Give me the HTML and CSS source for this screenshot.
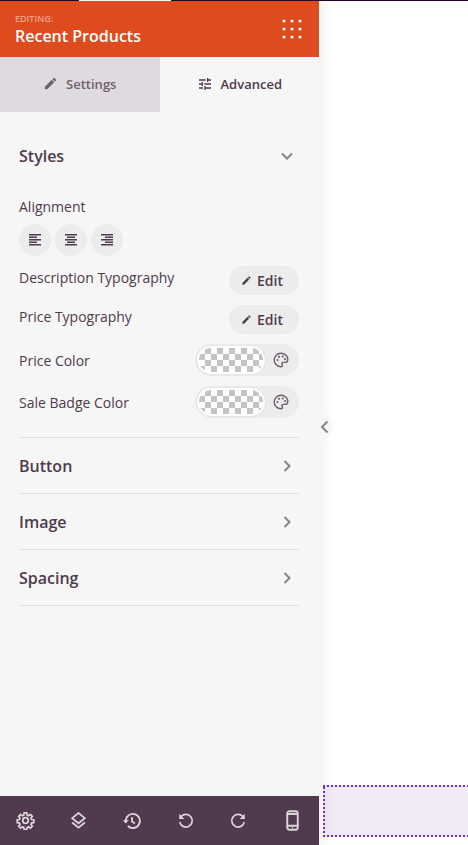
FILE: index.html
```html
<!DOCTYPE html>
<html lang="en">
<head>
    <meta charset="UTF-8">
    <title>Recent Products</title>
    <link rel="stylesheet" href="styles.css">
</head>
<body>
    <div class="topline"><span class="topline-light"></span></div>

    <div class="app">
        <aside class="panel">
            <header class="panel-head">
                <div>
                    <div class="editing">EDITING:</div>
                    <div class="module-name">Recent Products</div>
                </div>
                <svg class="dots" width="20" height="20" viewBox="0 0 20 20" fill="#fff">
                    <circle cx="2" cy="2" r="1.6"/><circle cx="10" cy="2" r="1.6"/><circle cx="18" cy="2" r="1.6"/>
                    <circle cx="2" cy="10" r="1.6"/><circle cx="10" cy="10" r="1.6"/><circle cx="18" cy="10" r="1.6"/>
                    <circle cx="2" cy="18" r="1.6"/><circle cx="10" cy="18" r="1.6"/><circle cx="18" cy="18" r="1.6"/>
                </svg>
            </header>

            <div class="tabs">
                <div class="tab tab-off">
                    <svg width="15" height="15" viewBox="0 0 24 24" fill="#6f5f6d"><path d="M3 17.25V21h3.75L17.81 9.94l-3.75-3.75L3 17.25zM20.71 7.04a1 1 0 0 0 0-1.41l-2.34-2.34a1 1 0 0 0-1.41 0l-1.83 1.83 3.75 3.75 1.83-1.83z"/></svg>
                    <span>Settings</span>
                </div>
                <div class="tab">
                    <svg width="16" height="16" viewBox="0 0 24 24" fill="#4f3a4d"><path d="M3 17v2h6v-2H3zM3 5v2h10V5H3zm10 16v-2h8v-2h-8v-2h-2v6h2zM7 9v2H3v2h4v2h2V9H7zm14 4v-2H11v2h10zm-6-4h2V7h4V5h-4V3h-2v6z"/></svg>
                    <span>Advanced</span>
                </div>
            </div>

            <div class="panel-body">
                <section class="group group-open">
                    <div class="group-title">
                        <span>Styles</span>
                        <svg class="chev" width="14" height="14" viewBox="0 0 14 14"><path d="M2 4.500l5 5 5-5"/></svg>
                    </div>

                    <div class="field-label">Alignment</div>
                    <div class="aligns">
                        <div class="align-btn">
                            <svg width="12" height="12" viewBox="0 0 12 12"><path d="M0 .75h12M0 3.250h8M0 5.750h12M0 8.250h8M0 10.750h12"/></svg>
                        </div>
                        <div class="align-btn">
                            <svg width="12" height="12" viewBox="0 0 12 12"><path d="M0 .75h12M2 3.250h8M0 5.750h12M2 8.250h8M0 10.750h12"/></svg>
                        </div>
                        <div class="align-btn">
                            <svg width="12" height="12" viewBox="0 0 12 12"><path d="M0 .75h12M4 3.250h8M0 5.750h12M4 8.250h8M0 10.750h12"/></svg>
                        </div>
                    </div>

                    <div class="row row-edit">
                        <span>Description Typography</span>
                        <div class="edit-btn">
                            <svg width="11" height="11" viewBox="0 0 24 24" fill="#4f3a4d"><path d="M3 17.25V21h3.75L17.81 9.94l-3.75-3.75L3 17.25zM20.71 7.04a1 1 0 0 0 0-1.41l-2.34-2.34a1 1 0 0 0-1.41 0l-1.83 1.83 3.75 3.75 1.83-1.83z"/></svg>
                            Edit
                        </div>
                    </div>
                    <div class="row row-edit">
                        <span>Price Typography</span>
                        <div class="edit-btn">
                            <svg width="11" height="11" viewBox="0 0 24 24" fill="#4f3a4d"><path d="M3 17.25V21h3.75L17.81 9.94l-3.75-3.75L3 17.25zM20.71 7.04a1 1 0 0 0 0-1.41l-2.34-2.34a1 1 0 0 0-1.41 0l-1.83 1.83 3.75 3.75 1.83-1.83z"/></svg>
                            Edit
                        </div>
                    </div>
                    <div class="row row-color">
                        <span>Price Color</span>
                        <div class="color-pill">
                            <div class="swatch"></div>
                            <svg class="palette" width="16" height="16" viewBox="0 0 16 16"><path class="palette-line" d="M8 1.200C4.200 1.200 1.200 4.200 1.200 8s3 6.800 6.800 6.800c1 0 1.500-.6 1.500-1.300 0-.9-.7-1.100-.7-1.900 0-.7.6-1.200 1.300-1.200h1.600c1.800 0 3.100-1.200 3.100-3C14.800 3.700 11.800 1.200 8 1.200z"/><circle cx="4.500" cy="8" r="1.100"/><circle cx="6" cy="4.800" r="1.100"/><circle cx="9.800" cy="4.500" r="1.100"/><circle cx="12" cy="7" r="1.100"/></svg>
                        </div>
                    </div>
                    <div class="row row-color">
                        <span>Sale Badge Color</span>
                        <div class="color-pill">
                            <div class="swatch"></div>
                            <svg class="palette" width="16" height="16" viewBox="0 0 16 16"><path class="palette-line" d="M8 1.200C4.200 1.200 1.200 4.200 1.200 8s3 6.800 6.800 6.800c1 0 1.500-.6 1.500-1.300 0-.9-.7-1.100-.7-1.900 0-.7.6-1.200 1.300-1.200h1.600c1.800 0 3.100-1.200 3.100-3C14.800 3.700 11.800 1.200 8 1.200z"/><circle cx="4.500" cy="8" r="1.100"/><circle cx="6" cy="4.800" r="1.100"/><circle cx="9.800" cy="4.500" r="1.100"/><circle cx="12" cy="7" r="1.100"/></svg>
                        </div>
                    </div>
                </section>

                <section class="group">
                    <div class="group-title">
                        <span>Button</span>
                        <svg class="chev" width="14" height="14" viewBox="0 0 14 14"><path d="M4.500 2l5 5-5 5"/></svg>
                    </div>
                </section>
                <section class="group">
                    <div class="group-title">
                        <span>Image</span>
                        <svg class="chev" width="14" height="14" viewBox="0 0 14 14"><path d="M4.500 2l5 5-5 5"/></svg>
                    </div>
                </section>
                <section class="group">
                    <div class="group-title">
                        <span>Spacing</span>
                        <svg class="chev" width="14" height="14" viewBox="0 0 14 14"><path d="M4.500 2l5 5-5 5"/></svg>
                    </div>
                </section>
            </div>

            <footer class="panel-foot">
                <svg width="19" height="19" viewBox="0 0 24 24" class="foot-icon"><circle cx="12" cy="12" r="3.500"/><path d="M10.300 2.500h3.400l.5 2.800 1.700.7 2.300-1.600 2.400 2.400-1.600 2.300.7 1.700 2.800.5v3.400l-2.800.5-.7 1.700 1.600 2.300-2.400 2.400-2.300-1.600-1.700.7-.5 2.800h-3.400l-.5-2.800-1.700-.7-2.300 1.600-2.400-2.400 1.600-2.300-.7-1.700-2.800-.5v-3.400l2.800-.5.7-1.700-1.600-2.300 2.400-2.400 2.300 1.600 1.700-.7z"/></svg>
                <svg width="19" height="19" viewBox="0 0 24 24" class="foot-icon"><path d="M12 2.500l8 6.500-8 6.500-8-6.500z"/><path d="M4 14.500l8 6.500 8-6.500"/></svg>
                <svg width="20" height="20" viewBox="0 0 24 24" class="foot-icon"><path d="M4.500 12a8.500 8.500 0 1 1 2.500 6"/><path d="M12 7.500V12.500l3.500 2.500"/><path class="foot-fill" d="M1 11h7l-3.500 4z"/></svg>
                <svg width="19" height="19" viewBox="0 0 24 24" class="foot-icon"><path d="M6.500 7a8 8 0 1 1-1.800 7"/><path class="foot-fill" d="M4 3.500v6.500h6.500z"/></svg>
                <svg width="19" height="19" viewBox="0 0 24 24" class="foot-icon"><path d="M17.500 7a8 8 0 1 0 1.800 7"/><path class="foot-fill" d="M20 3.500v6.500h-6.500z"/></svg>
                <svg width="21" height="21" viewBox="0 0 24 24" class="foot-icon"><rect x="6" y="1.500" width="12" height="21" rx="2.500"/><path d="M6.500 18h11M6.500 4.500h11"/><circle class="foot-fill" cx="12" cy="20.200" r=".9"/></svg>
            </footer>

            <svg class="collapse-tab" width="13" height="52" viewBox="0 0 13 52">
                <path class="collapse-bump" d="M0 0C0 13 13 14 13 26C13 38 0 39 0 52z"/>
                <path class="collapse-chev" d="M8.500 20.500l-5.500 5.500 5.500 5.500"/>
            </svg>
        </aside>

        <main class="canvas">
            <div class="drop-zone"></div>
        </main>
    </div>
</body>
</html>
```

FILE: styles.css
```css
* {
    box-sizing: border-box;
}

html, body {
    height: 100%;
}

body {
    margin: 0;
    background: #fff;
    font-family: "Open Sans", sans-serif;
    color: #4f3a4d;
    overflow: hidden;
    display: flex;
    flex-direction: column;
}

.topline {
    height: 1px;
    background: #23082a;
    padding-left: 79px;
    flex: none;
}

.topline-light {
    display: block;
    width: 92px;
    height: 1px;
    background: #fff;
}

.app {
    flex: 1;
    display: flex;
    min-height: 0;
}

/* Left settings panel */
.panel {
    position: relative;
    width: 319px;
    flex: none;
    display: flex;
    flex-direction: column;
    background: #f6f6f6;
    box-shadow: 4px 0 12px rgba(0,0,0,0.07);
}

.panel-head {
    height: 56px;
    background: #de4b1e;
    display: flex;
    justify-content: space-between;
    align-items: center;
    padding: 0 17px 0 15px;
}

.editing {
    font-size: 9px;
    line-height: 12px;
    font-weight: 600;
    color: #f2a48c;
    margin-top: 1px;
}

.module-name {
    font-size: 16px;
    line-height: 22px;
    font-weight: 600;
    color: #fff;
}

.tabs {
    height: 55px;
    display: flex;
}

.tab {
    width: 50%;
    display: flex;
    justify-content: center;
    align-items: center;
    gap: 8px;
    font-size: 13px;
    font-weight: 600;
    padding-bottom: 2px;
}

.tab-off {
    background: #dfdadf;
    color: #6f5f6d;
}

.panel-body {
    flex: 1;
    padding: 17px 20px 0 19px;
}

.group {
    border-bottom: 1px solid #dfdfdf;
}

.group-title {
    height: 55px;
    display: flex;
    justify-content: space-between;
    align-items: center;
    font-size: 16px;
    font-weight: 600;
}

.group-open {
    padding-bottom: 9px;
}

.group-open .group-title {
    height: 54px;
    margin-bottom: 14px;
}

.chev {
    margin-right: 5px;
    fill: none;
    stroke: #8f808d;
    stroke-width: 2;
}

.field-label {
    font-size: 14px;
    line-height: 20px;
}

.aligns {
    display: flex;
    gap: 4px;
    margin-top: 7px;
    margin-bottom: 10px;
}

.align-btn {
    width: 32px;
    height: 32px;
    border-radius: 50%;
    background: #ececec;
    display: flex;
    justify-content: center;
    align-items: center;
}

.align-btn svg {
    fill: none;
    stroke: #4f3a4d;
    stroke-width: 1.400;
}

.row {
    display: flex;
    justify-content: space-between;
    font-size: 14px;
}

.row-edit {
    height: 39px;
    align-items: flex-start;
    line-height: 24px;
}

.row-color {
    height: 42px;
    align-items: flex-start;
    line-height: 34px;
}

.edit-btn {
    width: 70px;
    height: 29px;
    border-radius: 15px;
    background: #ececec;
    display: flex;
    justify-content: center;
    align-items: center;
    gap: 5px;
    padding-right: 4px;
    font-weight: 600;
}

.color-pill {
    width: 104px;
    height: 32px;
    border-radius: 16px;
    background: #ececec;
    display: flex;
    align-items: center;
    padding-left: 2px;
}

.swatch {
    width: 68px;
    height: 28px;
    border-radius: 14px;
    border: 2px solid #fff;
    box-shadow: 0 0 0 1px #e4e4e4;
    background-color: #fff;
    background-image: conic-gradient(#c4c4c4 25%, #fff 0 50%, #c4c4c4 0 75%, #fff 0);
    background-size: 12px 12px;
}

.palette {
    margin-left: 8px;
    fill: #6f5f6d;
}

.palette-line {
    fill: none;
    stroke: #6f5f6d;
    stroke-width: 1.400;
}

/* Bottom toolbar */
.panel-foot {
    height: 49px;
    background: #503a4f;
    display: flex;
    justify-content: space-between;
    align-items: center;
    padding: 0 16px;
}

.foot-icon {
    fill: none;
    stroke: #dbd5da;
    stroke-width: 2.200;
}

.foot-icon .foot-fill {
    fill: #dbd5da;
    stroke: none;
}

.collapse-tab {
    position: absolute;
    left: 319px;
    top: 400px;
}

.collapse-bump {
    fill: #f6f6f6;
}

.collapse-chev {
    fill: none;
    stroke: #8f808d;
    stroke-width: 2;
}

/* Page canvas on the right */
.canvas {
    flex: 1;
    min-width: 0;
    display: flex;
    flex-direction: column;
    justify-content: flex-end;
    padding: 0 0 8px 4px;
}

.drop-zone {
    height: 52px;
    margin-right: -4px;
    background-color: #f0eaf7;
    background-image:
        repeating-linear-gradient(90deg, #7431cc 0 2px, transparent 2px 4px),
        repeating-linear-gradient(90deg, #7431cc 0 2px, transparent 2px 4px),
        repeating-linear-gradient(0deg, #7431cc 0 2px, transparent 2px 4px);
    background-size: 100% 2px, 100% 2px, 2px 100%;
    background-position: 0 0, 0 100%, 0 0;
    background-repeat: no-repeat;
}
```
